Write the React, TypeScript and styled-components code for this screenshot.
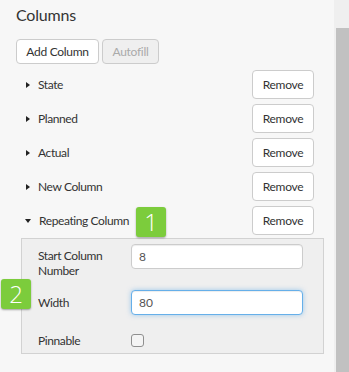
import React from "react";
import styled, { createGlobalStyle } from "styled-components";

const Global = createGlobalStyle`
  html, body { margin: 0; padding: 0; background: #f7f7f7; }
  body { font-family: Lato, "Open Sans", sans-serif; color: #333; font-size: 12px; letter-spacing: -0.4px; }
`;

const Page = styled.div`
  display: flex;
  width: 349px;
  height: 372px;
  overflow: hidden;
`;

const Content = styled.div`
  position: relative;
  width: 334px;
  padding: 4px 0 0 16px;
  box-sizing: border-box;
`;

const Title = styled.h2`
  margin: 0;
  font-size: 16px;
  font-weight: 400;
  line-height: 22px;
  color: #333;
  letter-spacing: -0.2px;
`;

const Toolbar = styled.div`
  display: flex;
  gap: 3px;
  margin-top: 13px;
`;

const Button = styled.button<{ $disabled?: boolean; $w: number }>`
  width: ${(p) => p.$w}px;
  height: 29px;
  box-sizing: border-box;
  border: 1px solid #ccc;
  border-radius: 4px;
  background: ${(p) => (p.$disabled ? "#efefef" : "#fff")};
  color: ${(p) => (p.$disabled ? "#aaa" : "#333")};
  font-family: inherit;
  font-size: 12px;
  letter-spacing: -0.3px;
  padding: 0;
  cursor: pointer;
`;

const SmallButton = styled(Button)`
  height: 25px;
`;

const List = styled.div`
  display: flex;
  flex-direction: column;
  gap: 5px;
  margin-top: 6px;
  padding-right: 20px;
`;

const Row = styled.div`
  display: flex;
  align-items: center;
  justify-content: space-between;
  padding-left: 10px;
`;

const RowLabel = styled.div`
  display: flex;
  align-items: center;
  gap: 8px;
`;

const Caret = styled.span<{ $open?: boolean }>`
  display: inline-block;
  width: 0;
  height: 0;
  ${(p) =>
    p.$open
      ? `border-left: 3px solid transparent; border-right: 3px solid transparent; border-top: 4px solid #222; margin-left: -1px;`
      : `border-top: 3px solid transparent; border-bottom: 3px solid transparent; border-left: 4px solid #222;`}
`;

const Panel = styled.div`
  margin: 3px 10px 0 5px;
  border: 1px solid #d2d2d2;
  background: #efefef;
  padding: 5px 20px 5px 16px;
  display: flex;
  flex-direction: column;
`;

const FormRow = styled.div<{ $top?: boolean; $mt?: number }>`
  display: grid;
  grid-template-columns: 93px 1fr;
  align-items: ${(p) => (p.$top ? "start" : "center")};
  margin-top: ${(p) => p.$mt ?? 0}px;
`;

const FieldLabel = styled.label<{ $pt?: number }>`
  line-height: 15px;
  font-size: 12px;
  color: #333;
  padding-top: ${(p) => p.$pt ?? 0}px;
`;

const Input = styled.input<{ $focus?: boolean }>`
  height: 25px;
  box-sizing: border-box;
  border: 1px solid ${(p) => (p.$focus ? "#66afe9" : "#ccc")};
  border-radius: 4px;
  background: #fff;
  padding: 0 7px;
  font-family: inherit;
  font-size: 12px;
  color: #555;
  outline: none;
  box-shadow: ${(p) =>
    p.$focus
      ? "inset 0 1px 1px rgba(0,0,0,.075), 0 0 5px rgba(102,175,233,.6)"
      : "inset 0 1px 1px rgba(0,0,0,.075)"};
`;

const Check = styled.span`
  display: block;
  width: 11px;
  height: 11px;
  border: 1px solid #8f8f8f;
  border-radius: 3px;
  background: #f4f4f4;
`;

const Badge = styled.div<{ $x: number; $y: number }>`
  position: absolute;
  left: ${(p) => p.$x}px;
  top: ${(p) => p.$y}px;
  width: 30px;
  height: 30px;
  border-radius: 3px;
  background: #7ccc3c;
  color: #fff;
  font-family: "Open Sans", sans-serif;
  font-weight: 300;
  font-size: 24px;
  letter-spacing: 0;
  line-height: 30px;
  text-align: center;
  box-shadow: 0 1px 2px rgba(0, 0, 0, 0.35);
`;

const Scrollbar = styled.div`
  width: 15px;
  background: #efefef;
  display: flex;
  flex-direction: column;
  padding-top: 28px;
  padding-left: 2px;
  box-sizing: border-box;
`;

const Thumb = styled.div`
  flex: 1;
  background: #c1c1c1;
`;

const columns = ["State", "Planned", "Actual", "New Column"];

export default function App() {
  return (
    <Page>
      <Global />
      <Content>
        <Title>Columns</Title>
        <Toolbar>
          <SmallButton $w={83}>Add Column</SmallButton>
          <SmallButton $w={57} $disabled>
            Autofill
          </SmallButton>
        </Toolbar>
        <List>
          {columns.map((c) => (
            <Row key={c}>
              <RowLabel>
                <Caret />
                <span>{c}</span>
              </RowLabel>
              <Button $w={62}>Remove</Button>
            </Row>
          ))}
          <Row>
            <RowLabel>
              <Caret $open />
              <span>Repeating Column</span>
            </RowLabel>
            <Button $w={62}>Remove</Button>
          </Row>
        </List>
        <Panel>
          <FormRow $top>
            <FieldLabel $pt={4}>
              Start Column
              <br />
              Number
            </FieldLabel>
            <Input defaultValue="8" />
          </FormRow>
          <FormRow $mt={12}>
            <FieldLabel>Width</FieldLabel>
            <Input $focus defaultValue="80" />
          </FormRow>
          <FormRow $mt={18}>
            <FieldLabel>Pinnable</FieldLabel>
            <Check />
          </FormRow>
        </Panel>
        <Badge $x={136} $y={207}>1</Badge>
        <Badge $x={1} $y={279}>2</Badge>
      </Content>
      <Scrollbar>
        <Thumb />
      </Scrollbar>
    </Page>
  );
}
